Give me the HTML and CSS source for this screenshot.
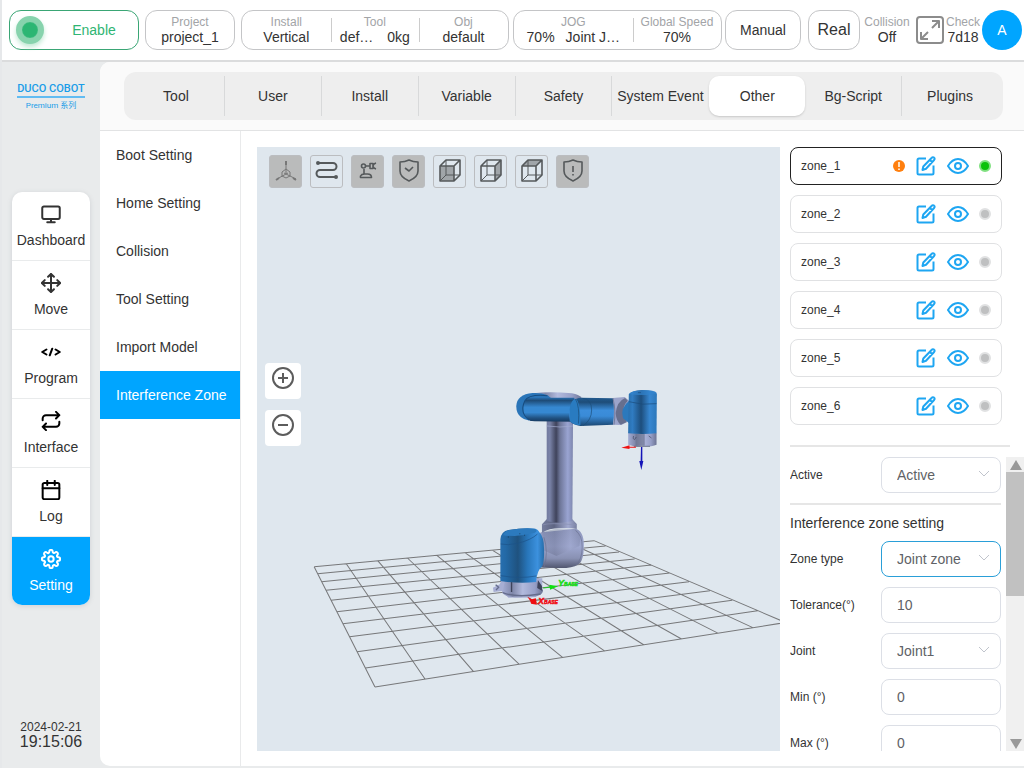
FILE: index.html
```html
<!DOCTYPE html>
<html lang="en">
<head>
<meta charset="utf-8">
<title>DUCO COBOT - Interference Zone</title>
<meta name="viewport" content="width=device-width, initial-scale=1">
<link rel="stylesheet" href="styles.css">
</head>
<body>
<svg class="defs" aria-hidden="true">
  <symbol id="edit" viewBox="0 0 20 20"><path d="M10 2.500H3a1.500 1.500 0 0 0-1.500 1.500v13A1.500 1.500 0 0 0 3 18.500h13a1.500 1.500 0 0 0 1.500-1.500V9.500"/><path d="M6.500 14l.8-3.500L15.800 1.700a1.500 1.500 0 0 1 2.300 0 1.500 1.500 0 0 1 0 2.300L10 12.700zM14 4l2.200 2.200"/></symbol>
  <symbol id="eye" viewBox="0 0 22 20"><path d="M1 10c3-5 6.500-7 10-7s7 2 10 7c-3 5-6.500 7-10 7s-7-2-10-7z"/><circle cx="11" cy="10" r="3"/></symbol>
  <symbol id="chevron" viewBox="0 0 12 8"><path d="M1 1l5 5 5-5"/></symbol>
</svg>

<header class="topbar">
  <button class="box enable" type="button"><span class="lamp"></span><span class="enable-text">Enable</span></button>
  <div class="box project"><div class="cell"><span class="cap">Project</span><span class="val">project_1</span></div></div>
  <div class="box install">
    <div class="cell"><span class="cap">Install</span><span class="val">Vertical</span></div>
    <div class="cell"><span class="cap">Tool</span><span class="val pair"><span>def…</span><span>0kg</span></span></div>
    <div class="cell"><span class="cap">Obj</span><span class="val">default</span></div>
  </div>
  <div class="box jog">
    <div class="cell wide"><span class="cap">JOG</span><span class="val pair tight"><span>70%</span><span>Joint J…</span></span></div>
    <div class="cell"><span class="cap">Global Speed</span><span class="val">70%</span></div>
  </div>
  <button class="box manual" type="button">Manual</button>
  <button class="box real" type="button">Real</button>
  <div class="info"><span class="cap">Collision</span><span class="val">Off</span></div>
  <button class="full" type="button" aria-label="Full screen">
    <svg viewBox="0 0 28 28"><rect x="1" y="1" width="26" height="26" rx="3"/><path d="M16 5h7v7M23 5l-7 7M5 16v7h7M5 23l7-7"/></svg>
  </button>
  <div class="info check"><span class="cap">Check</span><span class="val">7d18</span></div>
  <button class="avatar" type="button">A</button>
</header>

<div class="shell">
  <aside class="side">
    <div class="logo"><span class="brand">DUCO COBOT</span><span class="series">Premium 系列</span></div>
    <nav class="nav">
      <a href="#dashboard"><svg viewBox="0 0 24 24"><rect x="1.500" y="3" width="21" height="15" rx="2"/><path d="M12 18v3.500M7.500 22h9"/></svg>Dashboard</a>
      <a href="#move"><svg viewBox="0 0 24 24"><path d="M12 1v22M1 12h22M8.500 4.500 12 1l3.500 3.500M8.500 19.500 12 23l3.500-3.500M4.500 8.500 1 12l3.500 3.500M19.500 8.500 23 12l-3.500 3.500"/></svg>Move</a>
      <a href="#program"><svg class="black" viewBox="0 0 24 24"><path d="M6.500 9 1.500 12l5 3M17.500 9l5 3-5 3M13.500 8l-3 8"/></svg>Program</a>
      <a href="#interface"><svg class="black" viewBox="0 0 24 24"><path d="M18 1l4 4-4 4M22 5H6a4 4 0 0 0-4 4v2M6 23l-4-4 4-4M2 19h16a4 4 0 0 0 4-4v-2"/></svg>Interface</a>
      <a href="#log"><svg class="black" viewBox="0 0 24 24"><rect x="2" y="3.500" width="20" height="19.500" rx="2"/><path d="M7.500 1v5M16.500 1v5M2 10h20"/></svg>Log</a>
      <a class="on" href="#setting"><svg viewBox="0 0 24 24"><circle cx="12" cy="12" r="3.200"/><path d="M19.400 15a1.650 1.650 0 0 0 .33 1.820l.06.06a2 2 0 1 1-2.830 2.830l-.06-.06a1.650 1.650 0 0 0-2.800 1.170V21a2 2 0 0 1-4 0v-.09a1.650 1.650 0 0 0-2.900-1.260l-.06.06a2 2 0 1 1-2.830-2.830l.06-.06a1.650 1.650 0 0 0-1.170-2.800H3a2 2 0 0 1 0-4h.09A1.650 1.650 0 0 0 4.300 7.200l-.06-.06a2 2 0 1 1 2.830-2.830l.06.06A1.650 1.650 0 0 0 10 3.200V3a2 2 0 0 1 4 0v.09a1.650 1.650 0 0 0 2.820 1.280l.06-.06a2 2 0 1 1 2.830 2.830l-.06.06A1.650 1.650 0 0 0 20.910 10H21a2 2 0 0 1 0 4h-.09a1.650 1.650 0 0 0-1.510 1z"/></svg>Setting</a>
    </nav>
    <div class="clock"><span class="date">2024-02-21</span><span class="time">19:15:06</span></div>
  </aside>

  <main class="main">
    <div class="tabs-wrap">
      <nav class="tabs">
        <a href="#tool">Tool</a><a href="#user">User</a><a href="#install">Install</a><a href="#variable">Variable</a><a href="#safety">Safety</a><a class="before" href="#event">System Event</a><a class="on" href="#other">Other</a><a href="#bg">Bg-Script</a><a href="#plugins">Plugins</a>
      </nav>
    </div>
    <div class="content">
      <nav class="menu">
        <a href="#boot">Boot Setting</a>
        <a href="#home">Home Setting</a>
        <a href="#collision">Collision</a>
        <a href="#toolset">Tool Setting</a>
        <a href="#import">Import Model</a>
        <a class="on" href="#zone">Interference Zone</a>
      </nav>

      <section class="view" aria-label="Robot view">
        <svg class="scene" viewBox="0 0 523 604" preserveAspectRatio="xMidYMid slice">
          <defs>
            <linearGradient id="col"><stop offset="0" stop-color="#737b9f"/><stop offset=".12" stop-color="#7a83a8"/><stop offset=".36" stop-color="#3f435b"/><stop offset=".5" stop-color="#6d7597"/><stop offset=".8" stop-color="#9aa4d2"/><stop offset="1" stop-color="#7d86ad"/></linearGradient>
            <linearGradient id="cuff"><stop offset="0" stop-color="#757e9f"/><stop offset=".35" stop-color="#5e6582"/><stop offset=".75" stop-color="#a2aad0"/><stop offset="1" stop-color="#777f9f"/></linearGradient>
            <linearGradient id="ball" x2="0" y2="1"><stop offset="0" stop-color="#8d96bc"/><stop offset=".45" stop-color="#9ea7cf"/><stop offset=".75" stop-color="#8991b3"/><stop offset="1" stop-color="#50566f"/></linearGradient>
            <linearGradient id="base"><stop offset="0" stop-color="#286faf"/><stop offset=".12" stop-color="#2369a6"/><stop offset=".4" stop-color="#1f527f"/><stop offset=".62" stop-color="#2876ba"/><stop offset=".85" stop-color="#3c91de"/><stop offset="1" stop-color="#266da9"/></linearGradient>
            <linearGradient id="arm" x2="0" y2="1"><stop offset="0" stop-color="#286fae"/><stop offset=".12" stop-color="#1e4c78"/><stop offset=".4" stop-color="#3688d1"/><stop offset=".62" stop-color="#3688d1"/><stop offset=".85" stop-color="#205181"/><stop offset="1" stop-color="#173a60"/></linearGradient>
            <linearGradient id="arm2" x2="0" y2="1"><stop offset="0" stop-color="#225b90"/><stop offset=".16" stop-color="#1e4d79"/><stop offset=".45" stop-color="#3c8edb"/><stop offset=".65" stop-color="#3a8bd7"/><stop offset="1" stop-color="#1b4772"/></linearGradient>
            <linearGradient id="wrist"><stop offset="0" stop-color="#286fae"/><stop offset=".15" stop-color="#307cc2"/><stop offset=".45" stop-color="#1d4e7d"/><stop offset=".75" stop-color="#3787d1"/><stop offset="1" stop-color="#2c77b9"/></linearGradient>
            <linearGradient id="plate"><stop offset="0" stop-color="#a5add4"/><stop offset=".25" stop-color="#7f87a9"/><stop offset=".5" stop-color="#b2badd"/><stop offset=".8" stop-color="#969fc7"/><stop offset="1" stop-color="#6c7494"/></linearGradient>
          </defs>
          <g transform="translate(-1 203) scale(.338 .33333)">
            <path class="grid" d="M172 650 352 1011M267 641 500 987M360 632 643 964M448 624 779 943M535 616 907 922M618 608 1033 904M700 601 1148 885M778 593 1259 867M854 586 1368 850M928 579 1470 833M1000 572 1570 819M172 650 1000 572M182 671 1034 588M194 695 1074 606M207 721 1120 627M222 751 1169 645M239 785 1224 669M257 821 1281 695M277 860 1343 722M299 905 1409 751M324 954 1484 782M352 1011 1570 817"/>
            <path fill="#a7aed3" d="M701 713l20-10 8-18h118v42l-20 14-80 2-20-20-24 3z"/>
            <path fill="url(#plate)" d="M737 690h90l22 30q2 22-60 23-60 0-60-18z"/>
            <path fill="#3e435a" d="M754 690h4v36h-4zM834 690l12 18v14l-14-8z"/>
            <path stroke="#656d8d" stroke-width="4" fill="none" d="M730 728q40 16 112 4M709 704l9 8-8 8"/>
            <path fill="url(#ball)" d="M835 552q12-8 20-6l90-10q25 6 25 50 0 50-18 58-18 12-62 10l-60-2z"/>
            <path fill="url(#cuff)" opacity=".35" d="M848 545q50-14 101-7 14 20 8 50l-68 30-45-20z"/>
            <path stroke="#697190" stroke-width="2" fill="none" d="M945 541q21 15 20 51 0 36-19 54M852 562q14 45 0 92"/>
            <path fill="url(#cuff)" d="M860 508h76l13 14v15q-20-4-52-2-30 0-51 13v-25z"/>
            <path stroke="#8b93b5" stroke-width="2" fill="none" d="M847 525q20-8 101 0"/>
            <path fill="url(#col)" d="M860 205h78l-2 308q-37 10-76 0z"/>
            <path stroke="#a4acd0" stroke-width="2" fill="none" d="M860 228q40 6 78 0"/>
            <path fill="url(#base)" d="M723 568q2-24 24-28 45-8 80-4 8 3 11 10 14 16 14 48 2 35-5 55-16 12-18 47-50 6-106-3z"/>
            <path fill="#2c7abe" d="M731 556q4-12 18-16 42-7 75-4 12 5 1 12-30 8-60 10-25 0-34-2z"/>
            <path stroke="#1c5388" stroke-width="2" fill="none" d="M724 582q20 5 50-2 40-10 59-28M724 677q55 10 105 1"/>
            <path fill="#1b486f" d="M745 559h3v4h-3zM779 550h3v3h-3zM793 554h3v3h-3z"/>
            <path fill="url(#plate)" d="M820 130q45-6 115 0 20 3 29 14v30H820z"/>
            <path fill="#2a75b8" d="M818 129q25-2 45 7l12 10-40 67q-65 3-65-45 2-35 48-39z"/>
            <path fill="url(#arm)" d="M802 143h140v72l-118-1q-33-3-33-40 0-23 11-31z"/>
            <path stroke="#174d80" stroke-width="3" fill="none" d="M862 137q-55-5-67 16-16 36 13 57"/>
            <path fill="url(#arm2)" d="M935 154q12-11 28-11l93 2q8 30 1 79l-97 4q-22-3-32-14-4-30 7-60z"/>
            <path fill="#297bc0" d="M928 180q2-30 17-34 15 5 15 80-20 0-31-13z"/>
            <path stroke="#1b4c78" stroke-width="2" fill="none" d="M945 147q13 20 9 74M966 145q27 2 27 35 0 30-25 47"/>
            <path fill="#9ca4ca" d="M1056 144l35-3 17 15-10 60-17 9-25-1q6-40 0-80z"/>
            <path fill="#676f8e" d="M1092 144q-24 10-28 46 2 24 15 34l18-8-9-20q-6-26 12-44z"/>
            <path stroke="#747c9c" stroke-width="3" fill="none" d="M1056 144q10 40 3 80"/>
            <path fill="#2b79bd" d="M1106 151q-30 23-20 54l18 15z"/>
            <path fill="url(#plate)" d="M1101 248h84v36q-15 5-19 5h-48l-17-5z"/>
            <path fill="#646b87" opacity=".65" d="M1123 252h27v35h-27z"/>
            <path stroke="#414860" stroke-width="2" fill="none" d="M1117 258q-4 9 3 11l5-8M1162 258l8 6M1118 289h48"/>
            <path fill="url(#wrist)" d="M1103 132q8-11 40-12 38 0 43 11l-1 119q-40 4-84 0z"/>
            <path fill="#3283cd" opacity=".7" d="M1104 132q8-11 40-12 38 0 42 9-12 6-43 6-26 0-39-3z"/>
            <path stroke="#194b7b" stroke-width="2" fill="none" d="M1103 155q40 12 82 6M1130 128h9"/>
            <path fill="#f01010" d="M1081 293l24-7v4h19v3h-19v4z"/>
            <path fill="#1414b8" d="M1139 291h4v42h3l-6 27-6-27h4z"/>
            <path stroke="#20c820" stroke-width="3" d="M850 714l24-3"/>
            <path fill="#10e010" d="M868 704l26 5-24 10z"/>
            <path fill="#ee0d12" d="M803 740l13 8 12-3 3 19-17-3-3-9z"/>
          </g>
          <text class="axis y-axis" x="301" y="439">Y<tspan class="sub">BASE</tspan></text>
          <text class="axis x-axis" x="281" y="457">X<tspan class="sub">BASE</tspan></text>
        </svg>
        <div class="tools">
          <button class="fill" type="button" aria-label="Axes"><svg class="thin" viewBox="0 0 31 31"><path d="M16 6v12M16 18l-9 5M16 18l10 5M12 16l4-3 4 3v4l-4 2-4-2zM14 17l2 1 2-1"/><path d="M16 5v4M6 24l3-2M26 24l-3-2" stroke-width="2"/></svg></button>
          <button type="button" aria-label="Path"><svg class="bold" viewBox="0 0 31 31"><path d="M7 7h15a3.500 3.500 0 0 1 0 7H9a3.500 3.500 0 0 0 0 7h15"/><circle class="dot" cx="7" cy="7" r="1"/><circle class="dot" cx="25" cy="21" r="1"/></svg></button>
          <button class="fill" type="button" aria-label="Robot"><svg viewBox="0 0 31 31"><path d="M8.500 21.500v-1.500q1-2 4-2h3q4 0 4 3.500zM12 18v-5M13 10h5"/><circle cx="11.500" cy="10" r="2"/><path d="M18 8v4.500h3V7.500h-3zM24 7q-3 1-3 3t3 3M24 10v0"/></svg></button>
          <button class="fill" type="button" aria-label="Safety"><svg viewBox="0 0 31 31"><path d="M16 4q-4 2-9 2v9q0 6 9 10 9-4 9-10V6q-5 0-9-2z"/><path d="M12 12l4 3 4-4"/></svg></button>
          <button type="button" aria-label="Front view"><svg viewBox="0 0 31 31"><path class="face" d="M6 10h14v15H6z"/><path d="M6 10h14v15H6zM6 10l6-6h14v15l-6 6M20 10l6-6"/><path class="hair" d="M12 4v15h14M12 19l-6 6"/></svg></button>
          <button type="button" aria-label="Side view"><svg viewBox="0 0 31 31"><path class="face" d="M20 10l6-6v15l-6 6z"/><path d="M6 10h14v15H6zM6 10l6-6h14v15l-6 6M20 10l6-6"/><path class="hair" d="M12 4v15h14M12 19l-6 6"/></svg></button>
          <button type="button" aria-label="Top view"><svg viewBox="0 0 31 31"><path class="face" d="M6 10l6-6h14l-6 6z"/><path d="M6 10h14v15H6zM6 10l6-6h14v15l-6 6M20 10l6-6"/><path class="hair" d="M12 4v15h14M12 19l-6 6"/></svg></button>
          <button class="fill" type="button" aria-label="Warnings"><svg viewBox="0 0 31 31"><path d="M16 4q-4 2-9 2v9q0 6 9 10 9-4 9-10V6q-5 0-9-2z"/><path d="M16 10v6M16 18v1.500"/></svg></button>
        </div>
        <div class="zoom">
          <button type="button" aria-label="Zoom in"><svg viewBox="0 0 22 22"><circle cx="11" cy="11" r="10"/><path d="M11 6v10M6 11h10"/></svg></button>
          <button type="button" aria-label="Zoom out"><svg viewBox="0 0 22 22"><circle cx="11" cy="11" r="10"/><path d="M6 11h10"/></svg></button>
        </div>
      </section>

      <section class="panel">
        <ul class="zones">
          <li class="on"><span class="name">zone_1</span><span class="warn" role="img" aria-label="Warning"><svg viewBox="0 0 12 12"><circle cx="6" cy="6" r="6"/><path d="M6 2v5M6 8.500V10"/></svg></span><button type="button" aria-label="Edit zone_1"><svg><use href="#edit"/></svg></button><button class="see" type="button" aria-label="Show zone_1"><svg><use href="#eye"/></svg></button><span class="state"></span></li>
          <li><span class="name">zone_2</span><button type="button" aria-label="Edit zone_2"><svg><use href="#edit"/></svg></button><button class="see" type="button" aria-label="Show zone_2"><svg><use href="#eye"/></svg></button><span class="state"></span></li>
          <li><span class="name">zone_3</span><button type="button" aria-label="Edit zone_3"><svg><use href="#edit"/></svg></button><button class="see" type="button" aria-label="Show zone_3"><svg><use href="#eye"/></svg></button><span class="state"></span></li>
          <li><span class="name">zone_4</span><button type="button" aria-label="Edit zone_4"><svg><use href="#edit"/></svg></button><button class="see" type="button" aria-label="Show zone_4"><svg><use href="#eye"/></svg></button><span class="state"></span></li>
          <li><span class="name">zone_5</span><button type="button" aria-label="Edit zone_5"><svg><use href="#edit"/></svg></button><button class="see" type="button" aria-label="Show zone_5"><svg><use href="#eye"/></svg></button><span class="state"></span></li>
          <li><span class="name">zone_6</span><button type="button" aria-label="Edit zone_6"><svg><use href="#edit"/></svg></button><button class="see" type="button" aria-label="Show zone_6"><svg><use href="#eye"/></svg></button><span class="state"></span></li>
        </ul>
        <hr class="rule">
        <div class="scroll">
          <form class="form">
            <div class="row"><label for="active">Active</label><span class="pick"><select id="active"><option>Active</option><option>Inactive</option></select><svg><use href="#chevron"/></svg></span></div>
            <hr>
            <h2>Interference zone setting</h2>
            <div class="rows">
              <div class="row"><label for="type">Zone type</label><span class="pick focus"><select id="type"><option>Joint zone</option></select><svg><use href="#chevron"/></svg></span></div>
              <div class="row"><label for="tol">Tolerance(°)</label><input id="tol" type="text" value="10"></div>
              <div class="row"><label for="joint">Joint</label><span class="pick"><select id="joint"><option>Joint1</option></select><svg><use href="#chevron"/></svg></span></div>
              <div class="row"><label for="min">Min (°)</label><input id="min" type="text" value="0"></div>
              <div class="row"><label for="max">Max (°)</label><input id="max" type="text" value="0"></div>
            </div>
          </form>
          <div class="bar">
            <button type="button" aria-label="Scroll up"><svg viewBox="0 0 12 10"><path d="M6 0l6 10H0z"/></svg></button>
            <div class="track"><div class="thumb"></div></div>
            <button type="button" aria-label="Scroll down"><svg viewBox="0 0 12 10"><path d="M0 0h12L6 10z"/></svg></button>
          </div>
        </div>
      </section>
    </div>
  </main>
</div>
</body>
</html>
```
FILE: styles.css
```css
* { box-sizing: border-box; }
body {
  margin: 0;
  height: 100vh;
  display: flex;
  flex-direction: column;
  overflow: hidden;
  border-left: 2px solid #e6e8ea;
  background: #e9ebec;
  color: #333;
  font: 14px/16px "Liberation Sans", "Noto Sans CJK SC", sans-serif;
}
button { font: inherit; color: inherit; padding: 0; border: 0; background: none; cursor: pointer; }
a { color: inherit; text-decoration: none; }
svg { display: block; fill: none; stroke: currentColor; stroke-linejoin: round; }
hr { margin: 0; border: 0; height: 2px; background: #e6e6e6; }
.defs { position: absolute; width: 0; height: 0; }

/* Top bar */
.topbar {
  display: flex;
  align-items: center;
  flex: none;
  height: 62px;
  padding: 0 2px 0 7px;
  background: #fff;
  border-bottom: 2px solid #dbdcdd;
}
.box {
  display: flex;
  align-items: center;
  justify-content: center;
  height: 40px;
  border: 1px solid #c4c5c7;
  border-radius: 12px;
  background: #fff;
}
.enable { width: 130px; justify-content: flex-start; padding-left: 6px; border-color: #3aa675; color: #2fb573; }
.enable-text { flex: 1; padding-left: 6px; }
.lamp { width: 28px; height: 28px; border: 6px solid #87d3ad; border-radius: 50%; background: #2cb673; box-shadow: inset 0 0 1px #87d3ad, 0 3px 5px #bfe9d3; }
.project { width: 90px; margin-left: 6px; }
.install { flex: 268 1 0; margin-left: 6px; }
.jog { flex: 209 1 0; margin-left: 4px; }
.manual { width: 76px; margin-left: 3px; }
.real { width: 52px; margin-left: 7px; font-size: 16px; }
.cell, .info { display: flex; flex-direction: column; align-items: center; white-space: nowrap; }
.cell { flex: 88 1 0; height: 30px; }
.wide { flex-grow: 119; }
.cell + .cell { background: linear-gradient(#ccc, #ccc) 0 3px / 1px 24px no-repeat; }
.cap { font-size: 12px; line-height: 15px; color: #a2a4a7; }
.val { line-height: 15px; }
.pair { display: flex; gap: 14px; }
.tight { gap: 11px; }
.info { width: 54px; }
.check { width: 38px; }
.full { width: 28px; height: 28px; margin-left: 2px; color: #8c8c8c; }
.full svg { stroke-width: 2; }
.avatar { width: 40px; height: 40px; border-radius: 50%; background: #00a5ff; color: #fff; }

/* Side bar */
.shell { flex: 1; display: flex; min-height: 0; padding-bottom: 2px; }
.side { width: 98px; flex: none; display: flex; flex-direction: column; align-items: center; padding: 20px 0 16px; }
.logo { display: flex; flex-direction: column; width: 68px; height: 30px; text-align: center; color: #1a9de8; white-space: nowrap; font-family: Roboto, "Noto Sans CJK SC", sans-serif; }
.brand { font-size: 11px; font-weight: 500; line-height: 14px; border-bottom: 2px solid #62bcf2; }
.series { font-size: 8px; line-height: 16px; }
.nav { width: 78px; margin-top: 80px; border-radius: 10px; background: #fff; overflow: hidden; box-shadow: 0 1px 5px #ced1d4; }
.nav a { display: flex; flex-direction: column; align-items: center; gap: 8px; height: 69px; padding-top: 12px; border-bottom: 1px solid #e9ebec; }
.nav svg { width: 20px; height: 20px; stroke-width: 2.4; stroke-linecap: round; }
.nav .black { color: #000; }
.nav .on { height: 68px; background: #00a5ff; color: #fff; border: 0; }
.clock { margin-top: auto; display: flex; flex-direction: column; align-items: center; }
.date { font-size: 12px; line-height: 14px; }
.time { font-size: 16px; }

/* Main area */
.main { flex: 1; min-width: 0; display: flex; flex-direction: column; background: #fff; border-radius: 10px 0 0 10px; overflow: hidden; }
.tabs-wrap { padding: 10px 21px 10px 24px; background: #fafafa; border-bottom: 1px solid #e2e3e4; }
.tabs { display: flex; padding: 4px; border-radius: 12px; background: #eee; }
.tabs a { flex: 1 1 0; display: flex; align-items: center; justify-content: center; height: 40px; white-space: nowrap; border-right: 1px solid #d8d9da; }
.tabs .on { border: 0; border-radius: 10px; background: #fff; box-shadow: 0 1px 2px #c8c8c8; }
.tabs .before, .tabs a:last-child { border-color: transparent; }
.content { flex: 1; display: flex; min-height: 0; }
.menu { width: 141px; flex: none; border-right: 1px solid #e9eaeb; }
.menu a { display: block; padding: 16px; white-space: nowrap; }
.menu .on { background: #00a5ff; color: #fff; }

/* Robot view */
.view { position: relative; flex: 1; min-width: 0; margin: 16px 0 15px 16px; background: #dfe7ee; overflow: hidden; }
.scene { width: 100%; height: 100%; stroke: none; }
.grid { stroke: #77787a; stroke-width: 3; }
.axis { font: italic bold 9px "Liberation Sans", sans-serif; }
.sub { font-size: 5px; }
.x-axis { fill: #f01018; stroke: #f01018; stroke-width: .5px; }
.y-axis { fill: #18dc18; stroke: #18dc18; stroke-width: .5px; }
.tools { position: absolute; top: 8px; left: 12px; display: flex; gap: 8px; }
.tools button { width: 33px; height: 33px; border: 1px solid #bbbdc0; border-radius: 3px; color: #55595b; }
.tools .fill { background: #babbbb; }
.tools svg { width: 31px; height: 31px; stroke-width: 1.6; }
.tools .thin { stroke-width: 1; color: #777; }
.tools .bold { stroke-width: 2; }
.tools .dot { fill: currentColor; }
.tools .face { fill: #a0a5a9; stroke: none; }
.tools .hair { stroke-width: 1; }
.zoom { position: absolute; top: 216px; left: 8px; display: flex; flex-direction: column; gap: 11px; }
.zoom button { width: 36px; height: 36px; padding: 4px 7px 10px; border-radius: 4px; background: #fff; color: #5c5c5c; }
.zoom svg { width: 22px; height: 22px; stroke-width: 2; }

/* Zone panel */
.panel { width: 244px; flex: none; display: flex; flex-direction: column; padding: 16px 0 15px 10px; }
.zones { display: flex; flex-direction: column; gap: 10px; width: 212px; margin: 0; padding: 0; list-style: none; }
.zones li { display: flex; align-items: center; height: 38px; padding: 0 10px; border: 1px solid #e0e1e3; border-radius: 8px; }
.zones .on { border-color: #222; }
.name { flex: 1; font-size: 12px; }
.zones button { width: 20px; height: 20px; margin-left: 11px; color: #1ea6f2; }
.zones .see { width: 22px; }
.zones button svg { width: 100%; height: 20px; stroke-width: 2; }
.warn svg { width: 12px; height: 12px; fill: #ff7f0e; stroke: none; }
.warn path { stroke: #ffe0c0; stroke-width: 2; }
.state { width: 12px; height: 12px; margin-left: 10px; border: 2px solid #e0e1e2; border-radius: 50%; background: #bfc0c1; }
.on .state { border-color: #80e080; background: #0bc20b; }
.rule { margin: 20px 14px 10px 0; flex: none; }
.scroll { flex: 1; display: flex; min-height: 0; }
.form { flex: 1; min-width: 0; overflow: hidden; padding-right: 5px; }
.row { display: flex; align-items: center; height: 36px; }
.row label { flex: 1; font-size: 12px; }
.form hr { margin-top: 10px; }
h2 { margin: 0; font-size: 14px; font-weight: 400; line-height: 36px; }
.rows { display: flex; flex-direction: column; gap: 10px; }
.pick { display: flex; align-items: center; position: relative; width: 120px; }
.pick svg { position: absolute; right: 11px; top: 13px; width: 12px; height: 8px; color: #c0c4cc; pointer-events: none; }
select, input { width: 120px; height: 36px; padding: 0 15px; border: 1px solid #dcdfe6; border-radius: 8px; background: #fff; color: #606266; font: inherit; appearance: none; }
.focus select { border-color: #2a9fd8; }
.bar { width: 18px; flex: none; display: flex; flex-direction: column; background: #f0f0f0; }
.bar button { display: flex; align-items: center; justify-content: center; width: 18px; height: 15px; padding-left: 2px; }
.bar svg { width: 12px; height: 10px; fill: #999; stroke: none; }
.track { flex: 1; }
.thumb { height: 47%; background: #c1c1c1; }
```
